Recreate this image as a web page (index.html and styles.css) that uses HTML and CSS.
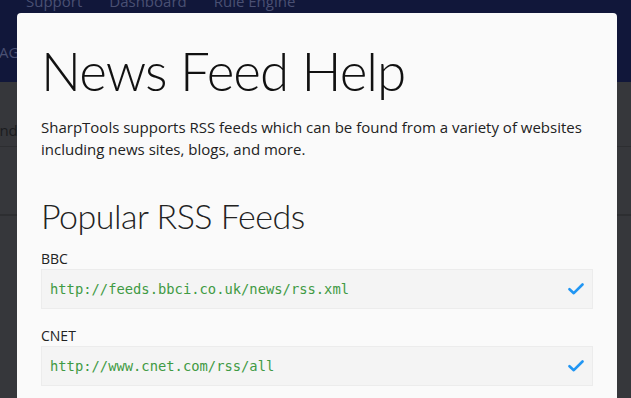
FILE: index.html
```html
<!DOCTYPE html>
<html>
<head>
<meta charset="utf-8">
<link rel="stylesheet" href="styles.css">
</head>
<body>
<div class="app">
  <header class="nav">
    <div class="nav-links">
      <span>Support</span>
      <span>Dashboard</span>
      <span>Rule Engine</span>
    </div>
    <div class="nav-sub">AG</div>
  </header>
  <div class="content">
    <div class="row row-first">end</div>
    <div class="row row-second"></div>
    <div class="row"></div>
  </div>
</div>
<div class="modal">
  <h1 class="title">News Feed Help</h1>
  <p class="intro">SharpTools supports RSS feeds which can be found from a variety of websites including news sites, blogs, and more.</p>
  <h2 class="subtitle">Popular RSS Feeds</h2>
  <div class="feed">
    <div class="feed-label">BBC</div>
    <div class="feed-box">
      <code class="feed-url">http://feeds.bbci.co.uk/news/rss.xml</code>
      <svg class="check" width="16" height="12" viewBox="0 0 16 12"><path d="M1.5 6.2 L5.8 10.2 L14.5 1.5" fill="none" stroke="#2196f3" stroke-width="2.6" stroke-linecap="round" stroke-linejoin="round"/></svg>
    </div>
  </div>
  <div class="feed">
    <div class="feed-label">CNET</div>
    <div class="feed-box">
      <code class="feed-url">http://www.cnet.com/rss/all</code>
      <svg class="check" width="16" height="12" viewBox="0 0 16 12"><path d="M1.5 6.2 L5.8 10.2 L14.5 1.5" fill="none" stroke="#2196f3" stroke-width="2.6" stroke-linecap="round" stroke-linejoin="round"/></svg>
    </div>
  </div>
</div>
</body>
</html>
```
FILE: styles.css
```css
html, body {
  margin: 0;
  padding: 0;
  height: 100%;
  overflow: hidden;
}
body {
  background: #36373b;
  font-family: "Open Sans", "Noto Sans", sans-serif;
  color: #222;
}
.app {
  height: 100%;
}
.nav {
  height: 82px;
  background: #11173a;
  color: #4a5073;
  font-size: 15px;
  overflow: hidden;
}
.nav-links {
  display: flex;
  gap: 27px;
  padding-left: 26px;
  margin-top: -11px;
  line-height: 24px;
}
.nav-sub {
  margin-top: 29px;
  margin-left: -1px;
  font-size: 15px;
  line-height: 20px;
}
.content {
  color: #1b1c1f;
  font-size: 15px;
}
.row {
  border-bottom: 1px solid #2d2e31;
}
.row-first {
  height: 65px;
  line-height: 20px;
  box-sizing: border-box;
  padding-top: 38px;
  margin-left: -9px;
}
.row-second {
  height: 67px;
}
.modal {
  position: absolute;
  left: 17px;
  top: 13px;
  width: 600px;
  height: 420px;
  box-sizing: border-box;
  background: #fafafa;
  border-radius: 4px;
  padding: 24px 24px;
}
.title {
  margin: 0;
  font-family: "Lato", "Open Sans", sans-serif;
  font-weight: 300;
  font-size: 53px;
  letter-spacing: -1px;
  line-height: 68px;
  color: #111;
}
.intro {
  margin: 11px 0 0;
  font-size: 15px;
  line-height: 22px;
  color: #222;
}
.subtitle {
  margin: 34px 0 0;
  font-family: "Lato", "Open Sans", sans-serif;
  font-weight: 300;
  font-size: 34px;
  letter-spacing: -0.5px;
  line-height: 44px;
  color: #222;
}
.feed {
  margin-top: 11px;
}
.feed + .feed {
  margin-top: 17px;
}
.feed-label {
  font-size: 14px;
  line-height: 20px;
  color: #222;
}
.feed-box {
  display: flex;
  align-items: center;
  justify-content: space-between;
  height: 40px;
  box-sizing: border-box;
  background: #f4f4f4;
  border: 1px solid #ececec;
  padding: 0 8px 0 8px;
}
.feed-url {
  font-family: "DejaVu Sans Mono", "Liberation Mono", monospace;
  font-size: 13.8px;
  color: #3f9a43;
}
.check {
  display: block;
}
```
